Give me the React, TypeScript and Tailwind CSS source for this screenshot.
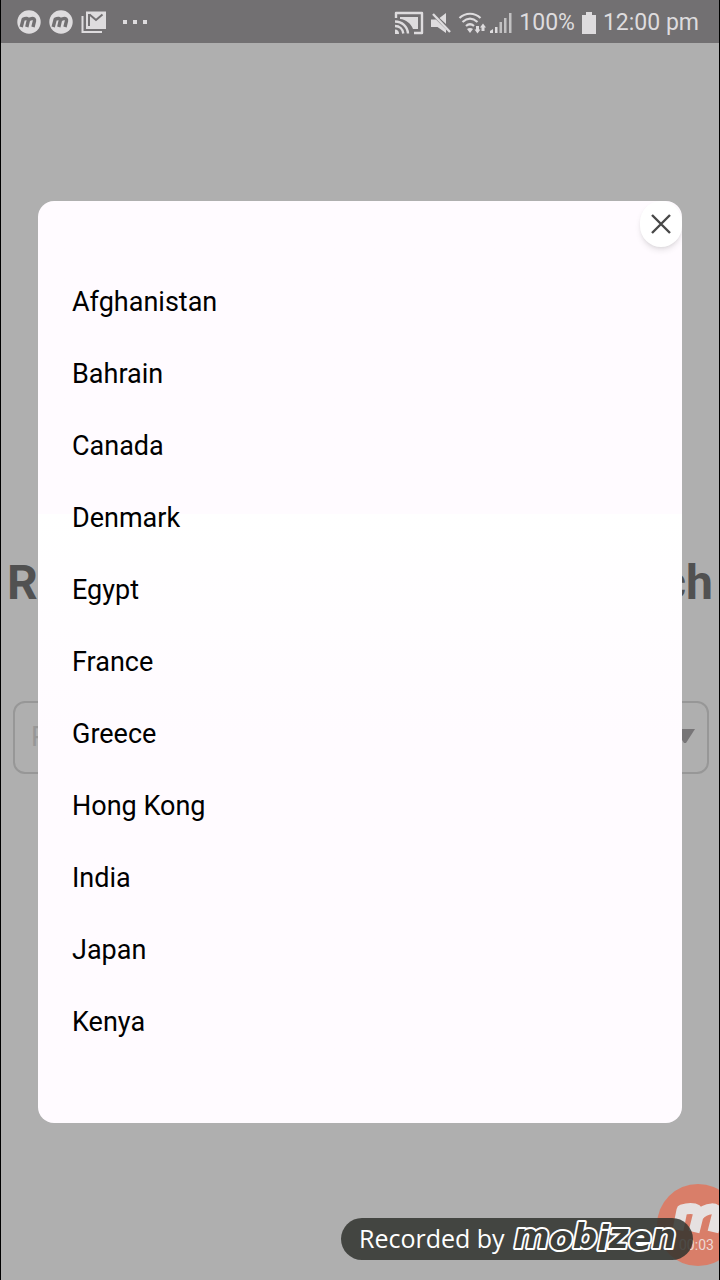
import type { ReactNode } from "react";

const countries = [
  "Afghanistan",
  "Bahrain",
  "Canada",
  "Denmark",
  "Egypt",
  "France",
  "Greece",
  "Hong Kong",
  "India",
  "Japan",
  "Kenya",
];

function MobizenDot() {
  return (
    <svg viewBox="0 0 24 24" className="size-6" aria-hidden="true">
      <circle cx="12" cy="12" r="11.7" fill="#dedcde" />
      <g fill="none" stroke="#727072" strokeWidth="3.4" strokeLinejoin="round">
        <path d="M4.200 17 6.200 9.300C8.500 8 11.800 8 11.300 10.500L9.800 17M11.300 10.500C13 8 18.200 7.600 17.500 10.800L16 17" />
      </g>
    </svg>
  );
}

function MailStack() {
  return (
    <svg viewBox="0 0 26 24" className="h-[24px] w-[26px]" aria-hidden="true">
      <path d="M1.500 6v16H21" fill="none" stroke="#dedcde" strokeWidth="2" />
      <path d="M5 1.500h20v17.500H5z" fill="#dedcde" />
      <path d="m8.500 4.500 6.500 5.500L21.500 4.500M8 4v12" fill="none" stroke="#727072" strokeWidth="2" />
    </svg>
  );
}

function Cast() {
  return (
    <svg viewBox="0 0 30 24" className="h-6 w-[30px]" fill="none" stroke="#dedcde" strokeWidth="2.4" aria-hidden="true">
      <path d="M2 7V2h26v20h-8" strokeLinejoin="round" />
      <path d="M6 6h18v12h-5C17 12.500 12 8.500 6 8z" fill="#dedcde" stroke="none" />
      <path d="M1 10.500c7 0 12.500 5 13 12M1 15c4.500 0 7.800 3 8.300 7.500" />
      <path d="M1 18.500c2.500 0 4 1.700 4 4.500H1z" fill="#dedcde" stroke="none" />
    </svg>
  );
}

function Muted() {
  return (
    <svg viewBox="0 0 20 22" className="h-[22px] w-5" fill="#dedcde" aria-hidden="true">
      <path d="M0 7.500h5L15 17.500V21l-8.500-6H0zM8.500 6 15 1v11z" />
      <path d="M2 2 19 20" fill="none" stroke="#dedcde" strokeWidth="2.4" />
    </svg>
  );
}

function WifiWithTraffic() {
  return (
    <svg viewBox="0 0 28 24" className="h-6 w-7" fill="none" stroke="#dedcde" aria-hidden="true">
      <path d="M1.500 7C7.500 1.300 16.500 1.300 22.500 7M4.500 11c4.800-4.200 10.200-4.200 15 0M8 15c2.600-2.300 5.400-2.300 8 0" strokeWidth="2.2" />
      <path d="m9 18 3 4 3-4c-1.800-1.300-4.200-1.300-6 0Z" fill="#dedcde" stroke="none" />
      <path d="m19.500 22.500-3-4h1.500V15h3v3.500h1.500zM25 12.500l3 4h-1.500V20h-3v-3.500H22z" fill="#dedcde" stroke="none" />
    </svg>
  );
}

function SignalBars() {
  return (
    <svg viewBox="0 0 22 22" className="size-[22px]" fill="#dedcde" aria-hidden="true">
      <path d="M0 21v-2l3-2v4zM5 15h2.500v6H5z" />
      <path d="M9.500 10H12v11H9.500zM14 6h2.500v15H14zM19 1h2.500v20H19z" opacity=".75" />
    </svg>
  );
}

function Battery() {
  return (
    <svg viewBox="0 0 14 22" className="h-[22px] w-3.5" fill="#dedcde" aria-hidden="true">
      <path d="M4 0h6v3h4v19H0V3h4z" />
    </svg>
  );
}

function StatusBar() {
  return (
    <header className="flex h-[43px] shrink-0 items-center justify-between bg-[#727072] pr-5 pl-4 text-[#dedcde]">
      <div className="flex items-center gap-2">
        <MobizenDot />
        <MobizenDot />
        <MailStack />
        <svg viewBox="0 0 24 4" className="ml-2 h-1 w-6" fill="#dedcde" aria-hidden="true">
          <path d="M0 0h4v4H0zM10 0h4v4h-4zM20 0h4v4h-4z" />
        </svg>
      </div>
      <div className="flex items-center gap-[7px] pt-0.5 text-[23px] leading-8">
        <Cast />
        <Muted />
        <div className="flex items-center gap-1">
          <WifiWithTraffic />
          <SignalBars />
        </div>
        <span>100%</span>
        <Battery />
        <span>12:00 pm</span>
      </div>
    </header>
  );
}

function CountryDialog({ children }: { children: ReactNode }) {
  return (
    <div
      role="dialog"
      aria-label="Countries"
      className="absolute inset-x-[37px] top-[201px] overflow-hidden rounded-2xl bg-linear-to-b from-[#fffbff] from-34% via-white via-34% to-[#fffbff] to-58% py-[65px]"
    >
      <button
        type="button"
        aria-label="Close"
        className="absolute top-0 right-0 flex h-[46px] w-[42px] items-center justify-center rounded-full bg-white text-[#484848] shadow-md"
      >
        <svg viewBox="0 0 20 20" className="size-5" fill="none" stroke="currentColor" strokeWidth="2.4" aria-hidden="true">
          <path d="m1 1 18 18M19 1 1 19" />
        </svg>
      </button>
      {children}
    </div>
  );
}

function RecorderBadge() {
  return (
    <div className="absolute right-0 bottom-0 h-[96px] w-[380px] overflow-hidden">
      <div className="absolute top-0 -right-5 size-[82px] rounded-full bg-[#d97e69]">
        <svg viewBox="0 0 82 82" className="size-full" aria-hidden="true">
          <path
            d="M21 46 25 26C34 23 43 24 41 32L37 48M41 32C49 23 63 22 60 32L56 48"
            fill="none"
            stroke="#e6e1e1"
            strokeWidth="11"
            strokeLinejoin="round"
          />
        </svg>
        <span className="absolute top-[53px] left-[22px] text-sm leading-4 text-[#eed8d4]">00:03</span>
      </div>
      <div className="absolute right-[26px] bottom-5 flex h-[42px] w-[352px] items-center gap-1 rounded-full bg-[#30322e]/85 pl-[18px] text-white">
        <span className="font-['Open_Sans',sans-serif] text-[25px] whitespace-nowrap">Recorded by</span>
        <svg viewBox="0 0 172 42" className="h-[42px] w-[172px] shrink-0" role="img" aria-label="Mobizen">
          <text
            x="5"
            y="30"
            dy="0 2 -2 2 -2 2 -2"
            className="fill-[#3c3e3a] stroke-white stroke-[4px] font-['DejaVu_Sans',sans-serif] text-[34px] font-bold italic [paint-order:stroke] [stroke-linejoin:round]"
          >
            mobizen
          </text>
        </svg>
      </div>
    </div>
  );
}

export default function App() {
  return (
    <div className="relative flex min-h-screen flex-col overflow-hidden border-x border-black bg-[#afafaf] font-[Roboto,sans-serif]">
      <StatusBar />
      <main className="flex grow flex-col pt-[508px]">
        <h1 className="flex justify-between px-1.5 text-[48px] leading-16 font-bold text-[#515151]">
          <span>R</span>
          <span>ch</span>
        </h1>
        <div className="relative mr-2.5 ml-3 mt-[86px]">
          <select
            aria-label="Country"
            className="h-[73px] w-full appearance-none rounded-xl border-2 border-[#979797] bg-transparent pl-4 text-[27px] text-[#979797]"
          >
            <option>Please select country</option>
          </select>
          <svg viewBox="0 0 20 14" className="absolute top-7 right-3.5 h-3.5 w-5" fill="#777577" aria-hidden="true">
            <path d="M0 0h20L11 14H9z" />
          </svg>
        </div>
      </main>
      <CountryDialog>
        <ul>
          {countries.map((country) => (
            <li key={country}>
              <button type="button" className="flex h-[72px] w-full items-center px-[34px] text-[27px] text-black">
                {country}
              </button>
            </li>
          ))}
        </ul>
      </CountryDialog>
      <RecorderBadge />
    </div>
  );
}
